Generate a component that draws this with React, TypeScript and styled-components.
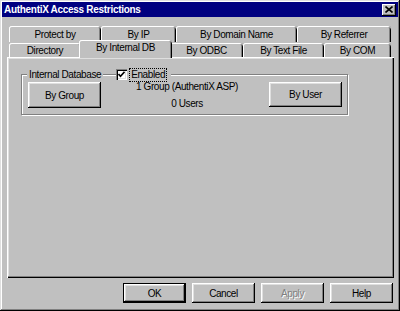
import styled, { createGlobalStyle } from "styled-components";

const GlobalStyle = createGlobalStyle`
  html, body {
    margin: 0;
    padding: 0;
    background: #c0c0c0;
  }
  body {
    font-family: "Liberation Sans", Arial, sans-serif;
    font-size: 10px;
    letter-spacing: -0.4px;
    color: #000;
  }
  * {
    box-sizing: border-box;
  }
`;

const backTabs = [
  { label: "Protect by", w: 92 },
  { label: "By IP", w: 75 },
  { label: "By Domain Name", w: 121 },
  { label: "By Referrer", w: 94 },
];

const frontTabs = [
  { label: "Directory", w: 72 },
  { label: "By Internal DB", w: 93, active: true },
  { label: "By ODBC", w: 73 },
  { label: "By Text File", w: 81 },
  { label: "By COM", w: 67 },
];

const dialogButtons = [
  { label: "OK", primary: true },
  { label: "Cancel" },
  { label: "Apply", disabled: true },
  { label: "Help" },
];

function App() {
  return (
    <>
      <GlobalStyle />
      <Window>
        <TitleBar>
          <Title>AuthentiX Access Restrictions</Title>
          <CloseBtn>
            <svg width="8" height="7" viewBox="0 0 8 7">
              <path d="M0.5 0.5 L7.5 6.5 M7.5 0.5 L0.5 6.5" stroke="#000" strokeWidth="1.6" />
            </svg>
          </CloseBtn>
        </TitleBar>
        <Body>
          <TabRow $h={16}>
            {backTabs.map((t) => (
              <Tab key={t.label} $w={t.w} $back>
                {t.label}
              </Tab>
            ))}
          </TabRow>
          <TabRow $h={15}>
            {frontTabs.map((t) => (
              <Tab key={t.label} $w={t.w} $active={t.active}>
                {t.label}
              </Tab>
            ))}
          </TabRow>
          <Panel>
            <GroupBox>
              <Legend>
                <LegendText>Internal Database</LegendText>
                <LegendGap />
                <CheckField>
                  <CheckBox>
                    <svg width="7" height="7" viewBox="0 0 7 7">
                      <path d="M0.5 3 L2.5 5.2 L6.5 0.8" stroke="#000" strokeWidth="1.6" fill="none" />
                    </svg>
                  </CheckBox>
                  <FocusLabel>Enabled</FocusLabel>
                </CheckField>
              </Legend>
              <GroupContent>
                <Button $w={73} $h={26}>By Group</Button>
                <Summary>
                  <span>1 Group (AuthentiX ASP)</span>
                  <span>0 Users</span>
                </Summary>
                <Button $w={73} $h={25}>By User</Button>
              </GroupContent>
            </GroupBox>
          </Panel>
          <ButtonRow>
            {dialogButtons.map((b) => (
              <Button
                key={b.label}
                $w={63}
                $h={20}
                $primary={b.primary}
                $disabled={b.disabled}
              >
                {b.label}
              </Button>
            ))}
          </ButtonRow>
        </Body>
      </Window>
    </>
  );
}

export default App;

const Window = styled.div`
  width: 400px;
  height: 311px;
  padding: 2px;
  background: #c0c0c0;
  display: flex;
  flex-direction: column;
  box-shadow: inset -1px -1px #000, inset 1px 1px #dfdfdf,
    inset -2px -2px #808080, inset 2px 2px #fff;
`;

const TitleBar = styled.div`
  height: 15px;
  background: #000080;
  color: #fff;
  display: flex;
  align-items: center;
  justify-content: space-between;
  padding: 0 2px 0 2px;
`;

const Title = styled.span`
  font-weight: bold;
  font-size: 10px;
  letter-spacing: -0.3px;
`;

const CloseBtn = styled.div`
  width: 14px;
  height: 12px;
  background: #c0c0c0;
  display: flex;
  align-items: center;
  justify-content: center;
  box-shadow: inset -1px -1px #000, inset 1px 1px #fff,
    inset -2px -2px #808080;
`;

const Body = styled.div`
  flex: 1;
  display: flex;
  flex-direction: column;
  padding: 9px 4px 0 5px;
`;

const TabRow = styled.div<{ $h: number }>`
  height: ${(p) => p.$h}px;
  display: flex;
  align-items: flex-start;
  padding-left: 2px;
`;

const Tab = styled.div<{ $w: number; $active?: boolean; $back?: boolean }>`
  position: relative;
  z-index: ${(p) => (p.$active ? 2 : 1)};
  width: ${(p) => p.$w}px;
  height: ${(p) => (p.$back ? 16 : p.$active ? 18 : 14)}px;
  margin: ${(p) =>
    p.$back ? "0" : p.$active ? "-2px -2px 0 -2px" : "1px 0 0 0"};
  padding-bottom: ${(p) => (p.$active ? 3 : 0)}px;
  background: #c0c0c0;
  border-radius: 3px 3px 0 0;
  display: flex;
  align-items: center;
  justify-content: center;
  white-space: nowrap;
  box-shadow: inset 1px 0 #fff, inset 0 1px #fff, inset -1px 0 #000,
    inset -2px 0 #808080;
`;

const Panel = styled.div`
  height: 221px;
  padding: 17px 0 0 14px;
  box-shadow: inset 1px 1px #fff, inset -1px -1px #000,
    inset -2px -2px #808080, inset 2px 2px #dfdfdf;
`;

const GroupBox = styled.div`
  position: relative;
  width: 327px;
  height: 41px;
  border: 1px solid #808080;
  box-shadow: inset 1px 1px #fff, 1px 1px #fff;
`;

const Legend = styled.div`
  position: absolute;
  top: -7px;
  left: 5px;
  height: 13px;
  display: flex;
  align-items: center;
`;

const LegendText = styled.span`
  background: #c0c0c0;
  padding: 0 2px;
  line-height: 13px;
`;

const LegendGap = styled.span`
  width: 13px;
`;

const CheckField = styled.div`
  display: flex;
  align-items: center;
  gap: 3px;
  height: 13px;
  background: #c0c0c0;
  padding-right: 5px;
`;

const CheckBox = styled.span`
  width: 11px;
  height: 11px;
  background: #fff;
  display: flex;
  align-items: center;
  justify-content: center;
  box-shadow: inset 1px 1px #808080, inset 2px 2px #000,
    inset -1px -1px #fff, inset -2px -2px #dfdfdf;
`;

const FocusLabel = styled.span`
  outline: 1px dotted #000;
  padding: 0 1px;
  line-height: 12px;
`;

const GroupContent = styled.div`
  display: flex;
  align-items: flex-start;
  padding: 7px 5px 0 6px;
`;

const Summary = styled.div`
  flex: 1;
  display: flex;
  flex-direction: column;
  align-items: center;
  gap: 4px;
  margin-top: -2px;
  padding-left: 4px;
  line-height: 13px;
  white-space: nowrap;
`;

const ButtonRow = styled.div`
  display: flex;
  justify-content: flex-end;
  gap: 6px;
  margin-top: 5px;
  padding-right: 1px;
`;

const Button = styled.div<{
  $w: number;
  $h: number;
  $primary?: boolean;
  $disabled?: boolean;
}>`
  width: ${(p) => p.$w}px;
  height: ${(p) => p.$h}px;
  background: #c0c0c0;
  display: flex;
  align-items: center;
  justify-content: center;
  border: ${(p) => (p.$primary ? "1px solid #000" : "none")};
  color: ${(p) => (p.$disabled ? "#808080" : "#000")};
  text-shadow: ${(p) => (p.$disabled ? "1px 1px #fff" : "none")};
  box-shadow: inset -1px -1px #000, inset 1px 1px #fff,
    inset -2px -2px #808080, inset 2px 2px #dfdfdf;
`;
